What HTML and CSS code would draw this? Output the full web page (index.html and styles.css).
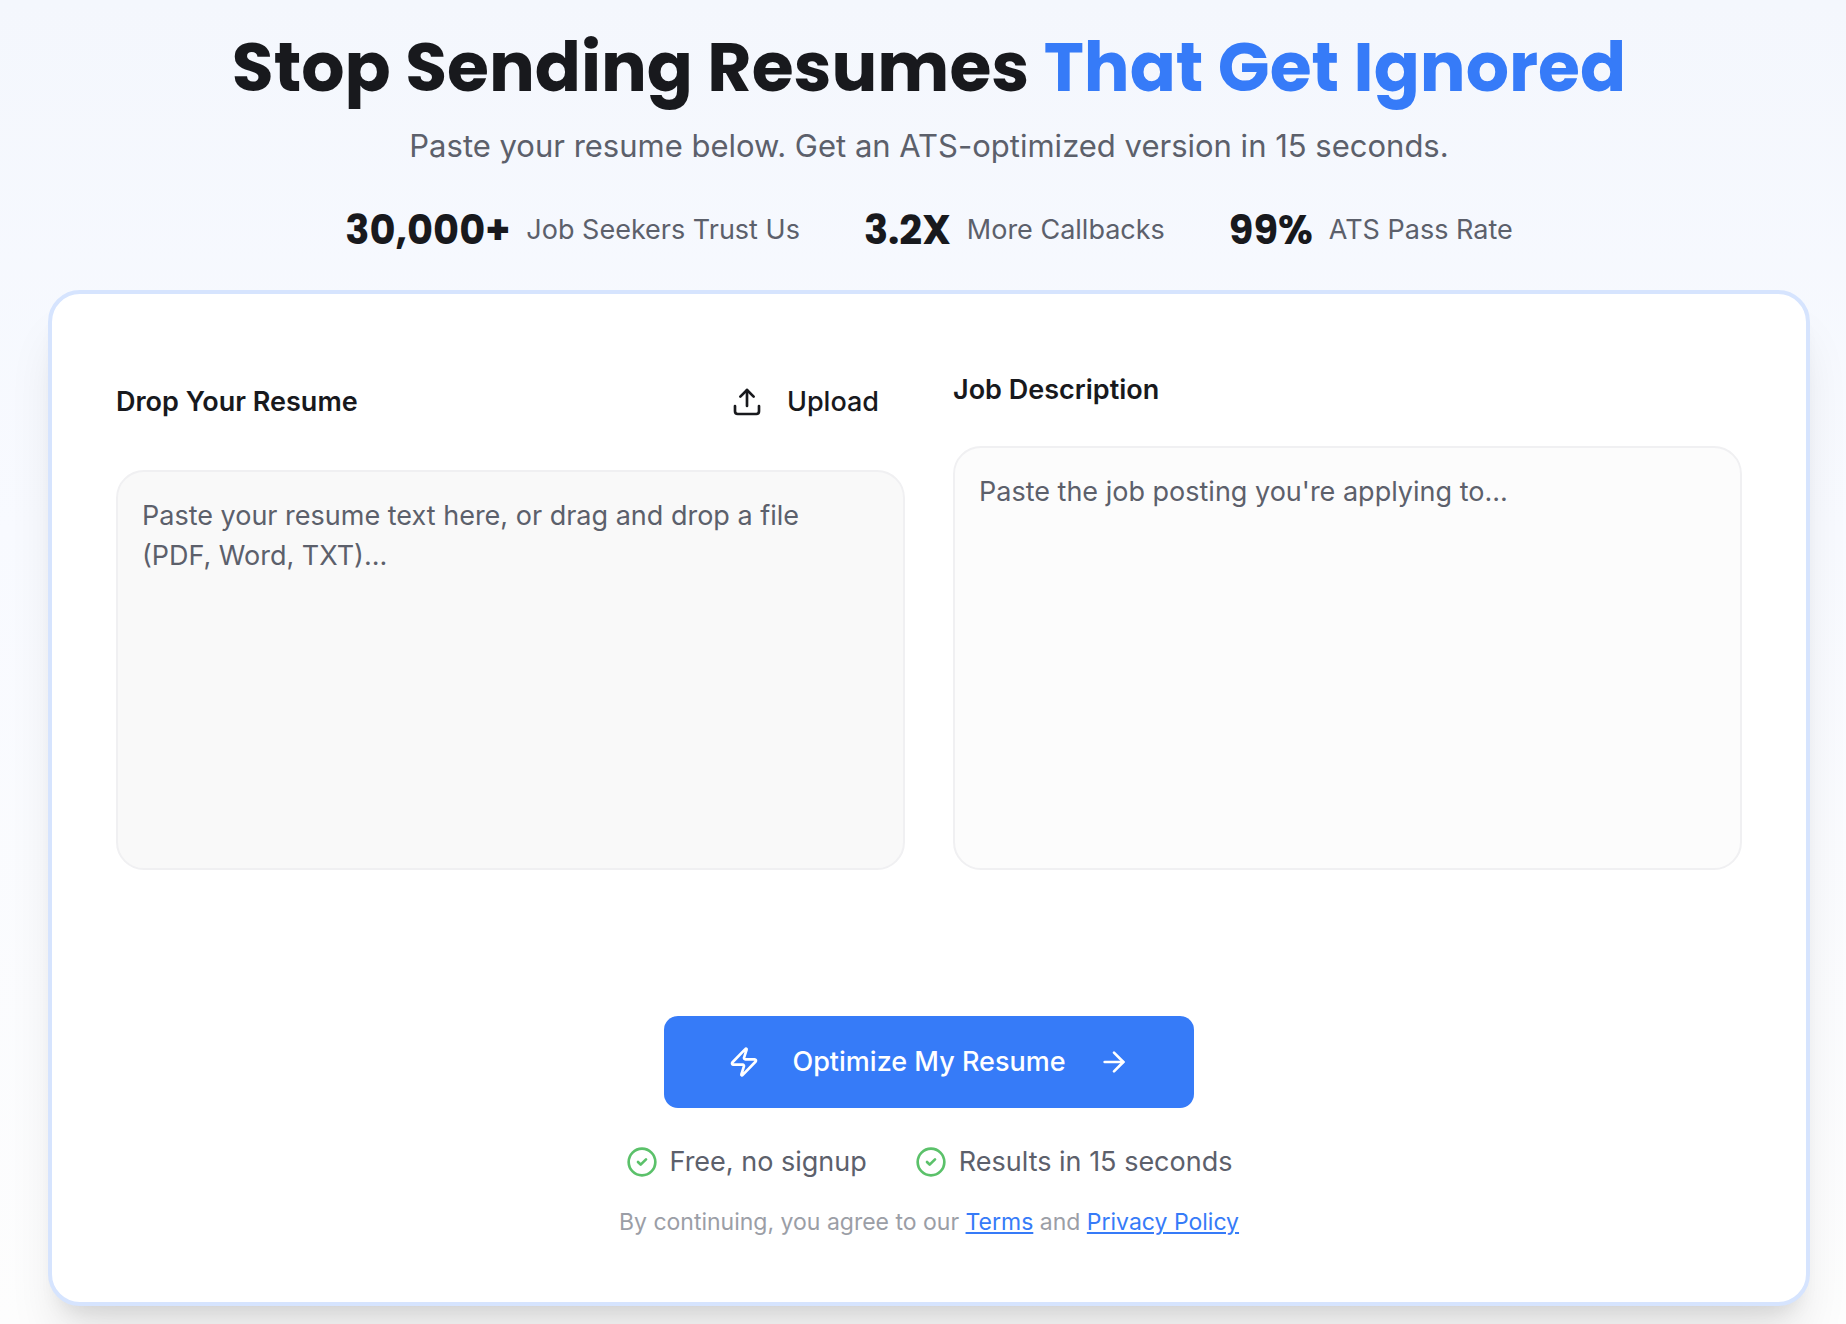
FILE: index.html
```html
<!DOCTYPE html>
<html lang="en">

<head>
    <meta charset="UTF-8">
    <meta name="viewport" content="width=device-width, initial-scale=1.0">
    <title>Resume Optimizer</title>
    <link rel="stylesheet" href="styles.css">
</head>

<body>
    <main class="page">
        <header class="hero">
            <h1>Stop Sending Resumes <span class="highlight">That Get Ignored</span></h1>
            <p class="subtitle">Paste your resume below. Get an ATS-optimized version in 15 seconds.</p>
            <ul class="stats">
                <li><strong>30,000+</strong> <span>Job Seekers Trust Us</span></li>
                <li><strong>3.2X</strong> <span>More Callbacks</span></li>
                <li><strong>99%</strong> <span>ATS Pass Rate</span></li>
            </ul>
        </header>

        <form class="card">
            <div class="fields">
                <div class="field">
                    <div class="field-header">
                        <label for="resume">Drop Your Resume</label>
                        <button type="button" class="upload-btn">
                            <svg class="icon" viewBox="0 0 24 24">
                                <path d="M21 15v4a2 2 0 0 1-2 2H5a2 2 0 0 1-2-2v-4" />
                                <polyline points="17 8 12 3 7 8" />
                                <line x1="12" y1="3" x2="12" y2="15" />
                            </svg>
                            Upload
                        </button>
                    </div>
                    <textarea id="resume" class="resume-input" name="resume" placeholder="Paste your resume text here, or drag and drop a file (PDF, Word, TXT)..."></textarea>
                </div>
                <div class="field">
                    <label for="job">Job Description</label>
                    <textarea id="job" name="job" placeholder="Paste the job posting you're applying to..."></textarea>
                </div>
            </div>

            <div class="actions">
                <button type="submit" class="submit-btn">
                    <svg class="icon" viewBox="0 0 24 24">
                        <path d="M4 14a1 1 0 0 1-.78-1.63l9.9-10.2a.5.5 0 0 1 .86.46l-1.92 6.02A1 1 0 0 0 13 10h7a1 1 0 0 1 .78 1.63l-9.9 10.2a.5.5 0 0 1-.86-.46l1.92-6.02A1 1 0 0 0 11 14z" />
                    </svg>
                    Optimize My Resume
                    <svg class="icon" viewBox="0 0 24 24">
                        <path d="M5 12h14" />
                        <path d="m12 5 7 7-7 7" />
                    </svg>
                </button>
                <ul class="benefits">
                    <li>
                        <svg class="icon check" viewBox="0 0 24 24">
                            <circle cx="12" cy="12" r="10" />
                            <path d="m9 12 2 2 4-4" />
                        </svg>
                        Free, no signup
                    </li>
                    <li>
                        <svg class="icon check" viewBox="0 0 24 24">
                            <circle cx="12" cy="12" r="10" />
                            <path d="m9 12 2 2 4-4" />
                        </svg>
                        Results in 15 seconds
                    </li>
                </ul>
                <p class="legal">By continuing, you agree to our <a href="#">Terms</a> and <a href="#">Privacy Policy</a></p>
            </div>
        </form>
    </main>
</body>

</html>
```

FILE: styles.css
```css
* {
    box-sizing: border-box;
}

body {
    font-family: Inter, "Liberation Sans", sans-serif;
    font-size: 27px;
    line-height: 40px;
    color: #18191d;
    background: linear-gradient(#f4f7fd, #f8faff 40%, #fdfdfd);
    margin: 0;
    min-height: 100vh;
}

.page {
    padding: 28px 36px 18px 48px;
}

.hero {
    text-align: center;
    margin-bottom: 40px;
}

h1 {
    font-family: Poppins, Inter, sans-serif;
    font-size: 68px;
    font-weight: 700;
    line-height: 80px;
    margin: 0 0 16px;
}

.highlight {
    color: #367bf8;
}

.subtitle {
    font-size: 31px;
    line-height: 44px;
    color: #5c606b;
    margin: 0 0 42px;
}

.stats,
.benefits {
    display: flex;
    flex-wrap: wrap;
    justify-content: center;
    list-style: none;
    margin: 0;
    padding: 0;
    color: #5c606b;
}

.stats {
    gap: 16px 64px;
}

.stats li {
    display: flex;
    align-items: center;
    gap: 16px;
}

.stats strong {
    font-family: Poppins, Inter, sans-serif;
    font-size: 40px;
    color: #18191d;
}

.card {
    background: #fff;
    border: 4px solid #d6e4fe;
    border-radius: 32px;
    padding: 76px 64px 64px;
    box-shadow: 0 40px 50px -10px rgba(0, 0, 0, 0.1), 0 16px 20px -12px rgba(0, 0, 0, 0.1);
}

.fields {
    display: grid;
    grid-template-columns: 1fr 1fr;
    gap: 48px;
}

.field {
    display: flex;
    flex-direction: column;
    gap: 36px;
}

.field label {
    font-weight: 600;
}

.field-header {
    display: flex;
    justify-content: space-between;
    align-items: center;
}

button {
    display: flex;
    align-items: center;
    border: none;
    font: inherit;
    font-weight: 500;
    cursor: pointer;
}

.upload-btn {
    gap: 24px;
    height: 64px;
    padding: 0 26px;
    color: #18191d;
    background: none;
}

.icon {
    width: 32px;
    height: 32px;
    fill: none;
    stroke: currentColor;
    stroke-width: 2;
    stroke-linecap: round;
    stroke-linejoin: round;
}

textarea {
    display: block;
    flex: 1;
    width: 100%;
    min-height: 400px;
    padding: 24px 40px 24px 24px;
    border: 2px solid #f0f0f2;
    border-radius: 28px;
    background: #fcfcfc;
    color: #18191d;
    font: inherit;
    resize: none;
}

.resume-input {
    background: #f9f9f9;
}

textarea::placeholder {
    color: #5c606b;
}

.actions {
    display: flex;
    flex-direction: column;
    align-items: center;
    margin-top: 146px;
}

.submit-btn {
    gap: 32px;
    height: 92px;
    padding: 0 64px;
    border-radius: 14px;
    background: #367bf8;
    color: #fff;
}

.benefits {
    gap: 16px 48px;
    margin: 34px 0 24px;
}

.benefits li {
    display: flex;
    align-items: center;
    gap: 12px;
}

.check {
    color: #5bc16a;
}

.legal {
    margin: 0;
    font-size: 23px;
    line-height: 32px;
    color: #9b9ea6;
}

.legal a {
    color: #367bf8;
}
```
